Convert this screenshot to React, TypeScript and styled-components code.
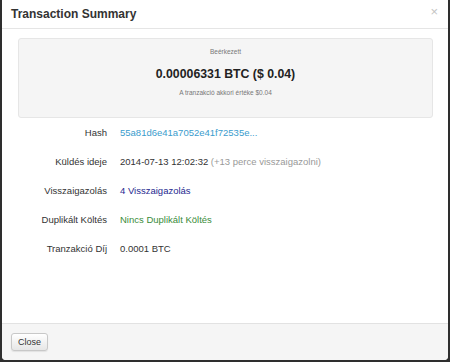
import React from "react";
import styled, { createGlobalStyle } from "styled-components";

const GlobalStyle = createGlobalStyle`
  html, body {
    margin: 0;
    padding: 0;
    background: #2e2e2e;
    font-family: "Liberation Sans", Arial, sans-serif;
    color: #333;
  }
`;

interface Row {
  label: string;
  value: React.ReactNode;
}

const App: React.FC = () => {
  const rows: Row[] = [
    {
      label: "Hash",
      value: <Link>55a81d6e41a7052e41f72535e...</Link>,
    },
    {
      label: "Küldés ideje",
      value: (
        <>
          2014-07-13 12:02:32 <Muted>(+13 perce visszaigazolni)</Muted>
        </>
      ),
    },
    {
      label: "Visszaigazolás",
      value: <Tone $color="#25288f">4 Visszaigazolás</Tone>,
    },
    {
      label: "Duplikált Költés",
      value: <Tone $color="#3a8c3a">Nincs Duplikált Költés</Tone>,
    },
    {
      label: "Tranzakció Díj",
      value: "0.0001 BTC",
    },
  ];

  return (
    <>
      <GlobalStyle />
      <Modal>
        <Header>
          <Title>Transaction Summary</Title>
          <Dismiss>×</Dismiss>
        </Header>
        <Body>
          <Well>
            <Caption>Beérkezett</Caption>
            <Amount>0.00006331 BTC ($ 0.04)</Amount>
            <Caption>A tranzakció akkori értéke $0.04</Caption>
          </Well>
          <Details>
            {rows.map((row) => (
              <React.Fragment key={row.label}>
                <Label>{row.label}</Label>
                <Value>{row.value}</Value>
              </React.Fragment>
            ))}
          </Details>
        </Body>
        <Footer>
          <Button>Close</Button>
        </Footer>
      </Modal>
    </>
  );
};

const Modal = styled.div`
  width: 446px;
  height: 360px;
  margin-left: 2px;
  background: #fff;
  border-radius: 0 0 4px 4px;
  display: flex;
  flex-direction: column;
  overflow: hidden;
`;

const Header = styled.div`
  height: 28px;
  border-bottom: 1px solid #e5e5e5;
  display: flex;
  align-items: center;
  justify-content: space-between;
  padding: 0 10px 0 9px;
`;

const Title = styled.h3`
  margin: 0;
  font-size: 12px;
  font-weight: bold;
  color: #333;
`;

const Dismiss = styled.span`
  font-size: 13px;
  color: #c4c4c4;
  line-height: 1;
  margin-top: -5px;
`;

const Body = styled.div`
  flex: 1;
  padding: 9px 15px 0 16px;
`;

const Well = styled.div`
  height: 80px;
  box-sizing: border-box;
  background: #f5f5f5;
  border: 1px solid #e6e6e6;
  border-radius: 3px;
  display: flex;
  flex-direction: column;
  align-items: center;
  padding-top: 9px;
`;

const Caption = styled.div`
  font-size: 6.5px;
  line-height: 8px;
  color: #777;
`;

const Amount = styled.div`
  font-size: 12.3px;
  line-height: 14px;
  font-weight: bold;
  color: #222;
  margin: 11px 0 8px;
`;

const Details = styled.div`
  display: grid;
  grid-template-columns: 89px 1fr;
  grid-auto-rows: 29px;
  column-gap: 13px;
  align-items: center;
  font-size: 9.5px;
`;

const Label = styled.div`
  text-align: right;
  color: #333;
`;

const Value = styled.div`
  color: #333;
`;

const Link = styled.span`
  color: #3a9ccd;
`;

const Muted = styled.span`
  color: #999;
`;

const Tone = styled.span<{ $color: string }>`
  color: ${(p) => p.$color};
`;

const Footer = styled.div`
  height: 37px;
  box-sizing: border-box;
  border-top: 1px solid #e2e2e2;
  background: #f5f5f5;
  padding: 9px 9px;
  display: flex;
  align-items: flex-start;
`;

const Button = styled.button`
  width: 37px;
  height: 18px;
  padding: 0;
  font-family: "Liberation Sans", Arial, sans-serif;
  font-size: 9px;
  color: #333;
  background: linear-gradient(#ffffff, #e6e6e6);
  border: 1px solid #c8c8c8;
  border-radius: 3px;
  box-shadow: 0 1px 1px rgba(0, 0, 0, 0.08);
`;

export default App;
